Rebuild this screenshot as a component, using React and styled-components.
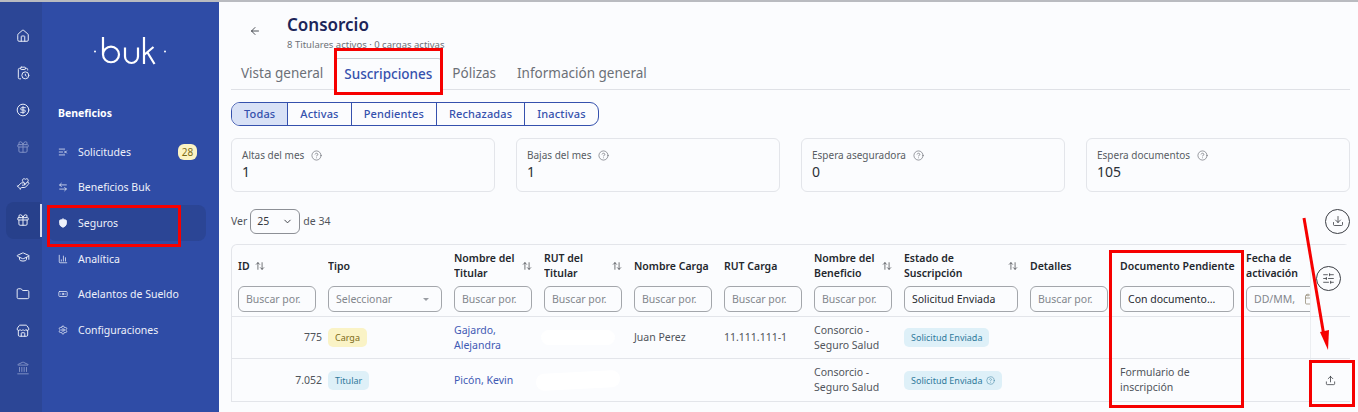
import React from "react";
import styled, { createGlobalStyle } from "styled-components";
import {
  ArrowLeft,
  ArrowLeftRight,
  ArrowUpDown,
  Banknote,
  Building2,
  Calendar,
  ChartColumn,
  ChevronDown,
  CircleDollarSign,
  CircleHelp,
  ClipboardClock,
  Download,
  Folder,
  Gift,
  GraduationCap,
  HandHeart,
  House,
  Landmark,
  ListX,
  Settings,
  ShieldCheck,
  SlidersHorizontal,
  Store,
  Upload,
} from "lucide-react";

const font = `"Noto Sans", "Open Sans", sans-serif`;

const GlobalStyle = createGlobalStyle`
  html, body {
    margin: 0;
    height: 412px;
    overflow: hidden;
    background: #fbfcfe;
    font-family: ${font};
  }
  * { box-sizing: border-box; }
`;

const Page = styled.div`
  position: relative;
  display: flex;
  width: 1358px;
  height: 412px;
  overflow: hidden;
  &::before {
    content: "";
    position: absolute;
    inset: 0 0 auto 0;
    height: 2px;
    background: #b9bbc0;
    z-index: 3;
  }
`;

const Rail = styled.nav`
  width: 42px;
  flex: none;
  padding-top: 18px;
  background: #2c4696;
  display: flex;
  flex-direction: column;
`;

const RailItem = styled.div`
  position: relative;
  width: 34px;
  height: 36.8px;
  margin-left: 6px;
  display: flex;
  align-items: center;
  justify-content: center;
  border-radius: 8px 0 0 8px;
  color: ${(p) => (p.$dim ? "#7f90c4" : "#e9edf7")};
  background: ${(p) => (p.$active ? "#27408b" : "transparent")};
  ${(p) =>
    p.$active &&
    `&::after {
      content: "";
      position: absolute;
      right: -2px;
      top: 2px;
      bottom: 2px;
      width: 2px;
      background: #d7dcec;
    }`}
`;

const NavPanel = styled.nav`
  width: 177px;
  flex: none;
  background: #2f4ca6;
  color: #fff;
  padding: 37px 13px 0 6px;
`;

const Logo = styled.svg`
  display: block;
  margin-left: 45px;
`;

const NavTitle = styled.div`
  margin: 40px 0 0 10px;
  height: 16px;
  line-height: 16px;
  font-size: 10.5px;
  font-weight: 700;
`;

const NavList = styled.div`
  margin-top: 13px;
  display: flex;
  flex-direction: column;
`;

const NavItem = styled.div`
  height: 35.6px;
  padding: 0 9px 0 10px;
  display: flex;
  align-items: center;
  gap: 10px;
  font-size: 10.5px;
  border-radius: 8px;
  color: #eef1fa;
  background: ${(p) => (p.$active ? "#2b4595" : "transparent")};
`;

const NavBadge = styled.span`
  margin-left: auto;
  width: 19px;
  height: 16px;
  border-radius: 6px;
  background: #fbf3c4;
  color: #7a6a16;
  font-size: 10px;
  line-height: 16px;
  text-align: center;
`;

const Main = styled.main`
  flex: 1;
  min-width: 0;
  padding: 0 8px 0 12px;
`;

const Head = styled.header`
  height: 58px;
  display: flex;
  align-items: flex-start;
  padding: 15px 0 0 18px;
  gap: 26px;
  color: #22262e;
  svg {
    margin-top: 10px;
  }
`;

const Title = styled.h1`
  margin: 0;
  font-size: 17px;
  line-height: 20px;
  font-weight: 600;
  color: #1b2559;
`;

const Subtitle = styled.div`
  font-size: 9.5px;
  line-height: 12px;
  margin-top: 4px;
  color: #6d7178;
`;

const Tabs = styled.div`
  height: 32px;
  display: flex;
  padding-left: 10px;
  border-bottom: 1px solid #dfe1e6;
`;

const Tab = styled.div`
  height: 32px;
  padding: 0 ${(p) => (p.$active ? "9px" : "0")};
  margin-right: ${(p) => (p.$active ? "10px" : "21px")};
  margin-left: ${(p) => (p.$active ? "-10px" : "0")};
  font-size: 13.5px;
  line-height: 30px;
  color: ${(p) => (p.$active ? "#3551ad" : "#6c7077")};
  font-weight: ${(p) => (p.$active ? 500 : 400)};
  ${(p) =>
    p.$active &&
    `border: 1px solid #c9ccd2;
     border-bottom-color: #fbfcfe;
     border-radius: 4px 4px 0 0;
     background: #fbfcfe;`}
`;

const Segments = styled.div`
  margin-top: 12px;
  display: inline-flex;
  height: 24px;
  border: 1px solid #3551ad;
  border-radius: 9px;
  overflow: hidden;
`;

const Segment = styled.div`
  height: 100%;
  padding: 0 ${(p) => p.$pad}px;
  font-size: 11px;
  font-weight: 500;
  line-height: 22px;
  letter-spacing: 0.15px;
  color: #3551ad;
  background: ${(p) => (p.$active ? "#d8e1f6" : "transparent")};
  & + & {
    border-left: 1px solid #3551ad;
  }
`;

const Cards = styled.section`
  margin-top: 12px;
  display: grid;
  grid-template-columns: repeat(4, 264px);
  gap: 21px;
`;

const Card = styled.div`
  height: 54px;
  padding: 9px 10px;
  border: 1px solid #e3e5ea;
  border-radius: 6px;
  background: #fbfcfe;
`;

const CardLabel = styled.div`
  display: flex;
  align-items: center;
  gap: 7px;
  font-size: 10px;
  line-height: 14px;
  color: #585c63;
`;

const CardValue = styled.div`
  font-size: 14px;
  line-height: 19px;
  color: #2c3036;
`;

const Toolbar = styled.div`
  height: 52px;
  display: flex;
  align-items: center;
  gap: 3px;
  padding-top: 6px;
  font-size: 10.5px;
  color: #50545b;
`;

const PageSelect = styled.div`
  width: 50px;
  height: 25px;
  padding: 0 6px;
  display: flex;
  align-items: center;
  justify-content: space-between;
  border: 1px solid #8d9096;
  border-radius: 6px;
  color: #33373d;
  font-size: 10.5px;
`;

const RoundButton = styled.button`
  width: ${(p) => p.$size || 25}px;
  height: ${(p) => p.$size || 25}px;
  padding: 0;
  display: flex;
  align-items: center;
  justify-content: center;
  border: 1px solid #3a3d43;
  border-radius: 50%;
  background: #fbfcfe;
  color: #2b2e34;
`;

const ToolbarEnd = styled.div`
  margin-left: auto;
`;

const TableBox = styled.div`
  position: relative;
  border: 1px solid #e3e5ea;
  border-bottom: 0;
  border-radius: 6px 6px 0 0;
  width: 1119px;
`;

const Row = styled.div`
  display: grid;
  grid-template-columns: 96px 126px 90px 90px 90px 90px 90px 126px 90px 126px 64px 40px;
  height: ${(p) => p.$h}px;
  border-bottom: 1px solid #e3e5ea;
`;

const HeadCell = styled.div`
  min-width: 0;
  overflow: hidden;
  padding-left: ${(p) => (p.$first ? "6px" : "0")};
  display: flex;
  flex-direction: column;
`;

const HeadLabel = styled.div`
  height: 40px;
  margin-top: 1px;
  display: flex;
  align-items: center;
  justify-content: ${(p) => (p.$spread ? "space-between" : "flex-start")};
  gap: 5px;
  width: ${(p) => p.$w || 78}px;
  flex: none;
  font-size: 10.5px;
  line-height: 15px;
  font-weight: 600;
  color: #24272d;
  white-space: ${(p) => (p.$nowrap ? "nowrap" : "normal")};
`;

const Filter = styled.div`
  width: ${(p) => p.$w}px;
  height: 26px;
  flex: none;
  padding: 0 7px;
  display: flex;
  align-items: center;
  justify-content: space-between;
  border: 1px solid #a3a6ab;
  border-radius: 6px;
  background: #fbfcfe;
  font-size: 10.5px;
  white-space: nowrap;
  color: ${(p) => (p.$filled ? "#26292f" : "#83878d")};
`;

const Caret = styled.span`
  width: 0;
  height: 0;
  margin-right: 5px;
  border: 3.5px solid transparent;
  border-top: 3.5px solid #9a9da3;
  border-bottom: 0;
`;

const Cell = styled.div`
  min-width: 0;
  padding-right: 6px;
  display: flex;
  align-items: center;
  justify-content: ${(p) => (p.$end ? "flex-end" : "flex-start")};
  font-size: 10.5px;
  line-height: 15px;
  color: ${(p) => (p.$link ? "#3f5ab4" : "#50545b")};
`;

const Chip = styled.span`
  height: 19px;
  padding: 0 7px;
  display: inline-flex;
  align-items: center;
  gap: 4px;
  border-radius: 5px;
  font-size: 9px;
  white-space: nowrap;
  background: ${(p) => (p.$tone === "yellow" ? "#faf3c6" : "#deF0f8")};
  color: ${(p) => (p.$tone === "yellow" ? "#7a6a16" : "#2f7a9c")};
`;

const Redacted = styled.span`
  display: block;
  width: ${(p) => p.$w}px;
  height: ${(p) => p.$h}px;
  margin-left: ${(p) => p.$ml}px;
  border-radius: 8px;
  background: #fff;
  transform: rotate(${(p) => p.$r || 0}deg);
`;

const StickyCell = styled.div`
  border-left: 1px solid #eceef1;
  display: flex;
  align-items: center;
  justify-content: center;
  color: #2b2e34;
  background: #fbfcfe;
`;

// anotaciones rojas sobre la captura
const Mark = styled.div`
  position: absolute;
  left: ${(p) => p.$x}px;
  top: ${(p) => p.$y}px;
  width: ${(p) => p.$w}px;
  height: ${(p) => p.$h}px;
  border: 3px solid #f60000;
  z-index: 4;
`;

const ArrowMark = styled.svg`
  position: absolute;
  left: 1295px;
  top: 214px;
  z-index: 4;
`;

const FloatingButton = styled(RoundButton)`
  position: absolute;
  left: 1316px;
  top: 266px;
  z-index: 2;
`;

const railIcons = [
  [House],
  [ClipboardClock],
  [CircleDollarSign],
  [Gift, true],
  [HandHeart],
  [Gift, false, true],
  [GraduationCap],
  [Folder],
  [Store],
  [Landmark, true],
];

const navItems = [
  { label: "Solicitudes", Icon: ListX, badge: 28 },
  { label: "Beneficios Buk", Icon: ArrowLeftRight },
  { label: "Seguros", Icon: ShieldCheck, active: true },
  { label: "Analítica", Icon: ChartColumn },
  { label: "Adelantos de Sueldo", Icon: Banknote },
  { label: "Configuraciones", Icon: Settings },
];

const Sort = () => <ArrowUpDown size={10} color="#2f3238" strokeWidth={1.6} />;

const Help = ({ size = 11 }) => <CircleHelp size={size} strokeWidth={1.3} />;

const HeadColumn = ({ label, spread, nowrap, sort, w, first, children }) => (
  <HeadCell $first={first}>
    <HeadLabel $spread={spread} $nowrap={nowrap} $w={w}>
      <span>{label}</span>
      {sort && <Sort />}
    </HeadLabel>
    {children}
  </HeadCell>
);

export default function App() {
  return (
    <Page>
      <GlobalStyle />
      <Rail>
        {railIcons.map(([Icon, dim, active], i) => (
          <RailItem key={i} $dim={dim} $active={active}>
            <Icon size={14} strokeWidth={1.7} />
          </RailItem>
        ))}
      </Rail>
      <NavPanel>
        <Logo width="76" height="28" viewBox="0 0 76 28" fill="none" stroke="#fff" strokeWidth="2.2">
          <circle cx="2" cy="14.5" r="1" fill="#fff" stroke="none" />
          <path d="M10 0v18.5a8 8 0 0 0 16 0a8 8 0 0 0-16 0" transform="translate(0 -.5) scale(1 .97)" />
          <path d="M32 10.5v9a6.5 6.5 0 0 0 13 0v-9" />
          <path d="M51 0v27M51 18l9.5-8M54.5 15.5l7 11.5" />
          <circle cx="72" cy="14.5" r="1" fill="#fff" stroke="none" />
        </Logo>
        <NavTitle>Beneficios</NavTitle>
        <NavList>
          {navItems.map(({ label, Icon, badge, active }) => (
            <NavItem key={label} $active={active}>
              <Icon size={10} strokeWidth={active ? 2.4 : 1.8} fill={active ? "#eef1fa" : "none"} />
              <span>{label}</span>
              {badge && <NavBadge>{badge}</NavBadge>}
            </NavItem>
          ))}
        </NavList>
      </NavPanel>
      <Main>
        <Head>
          <ArrowLeft size={12} strokeWidth={1.6} />
          <div>
            <Title>Consorcio</Title>
            <Subtitle>8 Titulares activos · 0 cargas activas</Subtitle>
          </div>
        </Head>
        <Tabs>
          <Tab>Vista general</Tab>
          <Tab $active>Suscripciones</Tab>
          <Tab>Pólizas</Tab>
          <Tab>Información general</Tab>
        </Tabs>
        <Segments>
          <Segment $active $pad={12}>Todas</Segment>
          <Segment $pad={12}>Activas</Segment>
          <Segment $pad={12}>Pendientes</Segment>
          <Segment $pad={12}>Rechazadas</Segment>
          <Segment $pad={12}>Inactivas</Segment>
        </Segments>
        <Cards>
          {[
            ["Altas del mes", 1],
            ["Bajas del mes", 1],
            ["Espera aseguradora", 0],
            ["Espera documentos", 105],
          ].map(([label, value]) => (
            <Card key={label}>
              <CardLabel>
                {label} <Help />
              </CardLabel>
              <CardValue>{value}</CardValue>
            </Card>
          ))}
        </Cards>
        <Toolbar>
          Ver
          <PageSelect>
            25 <ChevronDown size={11} />
          </PageSelect>
          de 34
          <ToolbarEnd>
            <RoundButton aria-label="Descargar">
              <Download size={12} strokeWidth={1.5} />
            </RoundButton>
          </ToolbarEnd>
        </Toolbar>
        <TableBox>
          <Row $h={72}>
            <HeadColumn first label="ID" sort>
              <Filter $w={78}>Buscar por.</Filter>
            </HeadColumn>
            <HeadColumn label="Tipo" w={114}>
              <Filter $w={114}>
                Seleccionar <Caret />
              </Filter>
            </HeadColumn>
            <HeadColumn label={<>Nombre del<br />Titular</>} spread sort>
              <Filter $w={78}>Buscar por.</Filter>
            </HeadColumn>
            <HeadColumn label={<>RUT del<br />Titular</>} spread sort>
              <Filter $w={78}>Buscar por.</Filter>
            </HeadColumn>
            <HeadColumn label="Nombre Carga" nowrap>
              <Filter $w={78}>Buscar por.</Filter>
            </HeadColumn>
            <HeadColumn label="RUT Carga" nowrap>
              <Filter $w={78}>Buscar por.</Filter>
            </HeadColumn>
            <HeadColumn label={<>Nombre del<br />Beneficio</>} spread sort>
              <Filter $w={78}>Buscar por.</Filter>
            </HeadColumn>
            <HeadColumn label={<>Estado de<br />Suscripción</>} spread sort w={114}>
              <Filter $w={114} $filled>Solicitud Enviada</Filter>
            </HeadColumn>
            <HeadColumn label="Detalles">
              <Filter $w={78}>Buscar por.</Filter>
            </HeadColumn>
            <HeadColumn label="Documento Pendiente" nowrap w={114}>
              <Filter $w={114} $filled>Con documento...</Filter>
            </HeadColumn>
            <HeadColumn label={<>Fecha de<br />activación</>} w={64}>
              <Filter $w={78}>
                DD/MM,
                <Calendar size={12} color="#8a7f68" strokeWidth={1.4} />
              </Filter>
            </HeadColumn>
            <StickyCell />
          </Row>
          <Row $h={42}>
            <Cell $end>775</Cell>
            <Cell><Chip $tone="yellow">Carga</Chip></Cell>
            <Cell $link>Gajardo,<br />Alejandra</Cell>
            <Cell><Redacted $w={74} $h={15} $ml={-3} /></Cell>
            <Cell>Juan Perez</Cell>
            <Cell>11.111.111-1</Cell>
            <Cell><span>Consorcio -<br />Seguro Salud</span></Cell>
            <Cell><Chip>Solicitud Enviada</Chip></Cell>
            <Cell />
            <Cell />
            <Cell />
            <StickyCell />
          </Row>
          <Row $h={43}>
            <Cell $end>7.052</Cell>
            <Cell><Chip>Titular</Chip></Cell>
            <Cell $link>Picón, Kevin</Cell>
            <Cell><Redacted $w={84} $h={17} $ml={-8} $r={-3} /></Cell>
            <Cell />
            <Cell />
            <Cell><span>Consorcio -<br />Seguro Salud</span></Cell>
            <Cell><Chip>Solicitud Enviada <Help size={9} /></Chip></Cell>
            <Cell />
            <Cell><span>Formulario de<br />inscripción</span></Cell>
            <Cell />
            <StickyCell><Upload size={11} strokeWidth={1.6} /></StickyCell>
          </Row>
        </TableBox>
      </Main>
      <FloatingButton aria-label="Ajustes">
        <SlidersHorizontal size={13} strokeWidth={1.4} />
      </FloatingButton>
      <Mark $x={334} $y={48} $w={109} $h={47} />
      <Mark $x={47} $y={205} $w={134} $h={42} />
      <Mark $x={1109} $y={250} $w={135} $h={158} />
      <Mark $x={1309} $y={360} $w={46} $h={47} />
      <ArrowMark width="40" height="140" viewBox="0 0 40 140">
        <path d="M9 4l20 118" stroke="#f60000" strokeWidth="3" fill="none" />
        <path d="M25 118l9-2-1 20z" fill="#f60000" />
      </ArrowMark>
    </Page>
  );
}
